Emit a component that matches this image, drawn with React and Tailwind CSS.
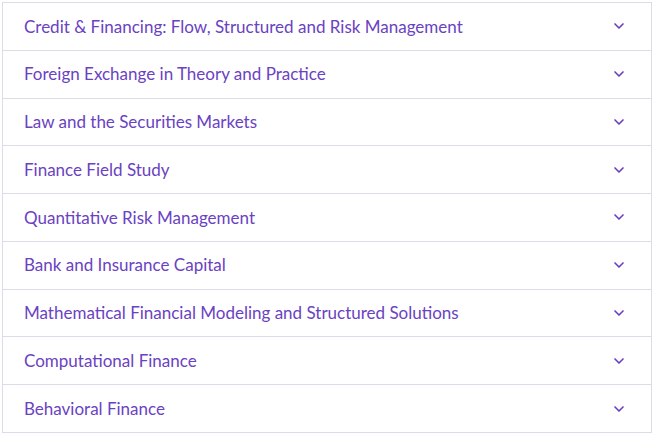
import { ChevronDown } from "lucide-react";

const items = [
  "Credit & Financing: Flow, Structured and Risk Management",
  "Foreign Exchange in Theory and Practice",
  "Law and the Securities Markets",
  "Finance Field Study",
  "Quantitative Risk Management",
  "Bank and Insurance Capital",
  "Mathematical Financial Modeling and Structured Solutions",
  "Computational Finance",
  "Behavioral Finance",
];

export default function App() {
  return (
    <div className="bg-white w-[654px] h-[438px] pt-[2px] pl-[2px]" style={{ fontFamily: "Lato, 'Open Sans', sans-serif" }}>
      <div className="w-[650px] border-t border-x border-[#dcdbe6]">
        {items.map((title) => (
          <button
            key={title}
            className="w-full h-[47.78px] flex items-center justify-between pl-[21px] pr-6 border-b border-[#dcdbe6] text-left"
          >
            <span className="text-[17px] text-[#6a42c2]">{title}</span>
            <ChevronDown className="h-4 w-4 text-[#6a40c0]" strokeWidth={2.5} />
          </button>
        ))}
      </div>
    </div>
  );
}
